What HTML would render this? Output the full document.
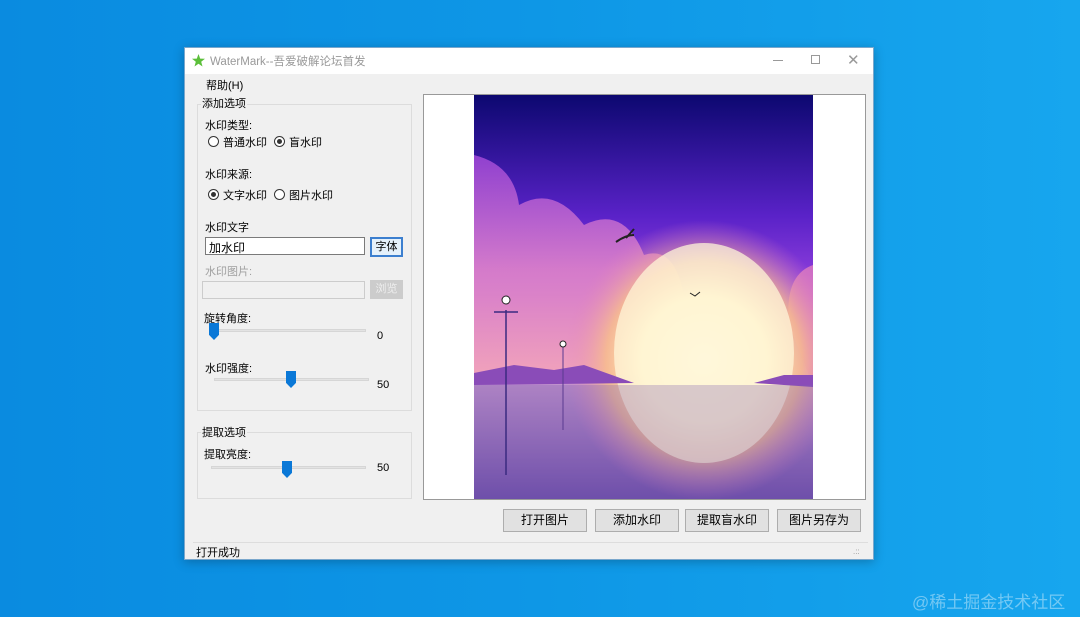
<!DOCTYPE html>
<html><head><meta charset="utf-8"><style>
*{margin:0;padding:0;box-sizing:border-box}
body{width:1080px;height:617px;overflow:hidden;position:relative;background:linear-gradient(90deg,#0a8be0 0%,#0e97e6 50%,#17a6ee 100%);font-family:"Liberation Sans","Noto Sans CJK SC",sans-serif;font-size:11px;color:#000}
.a{position:absolute}
.win{left:184px;top:47px;width:690px;height:513px;background:#f0f0f0;border:1px solid #7aa7cc;box-shadow:0 2px 10px rgba(0,0,0,.25)}
.title{left:0;top:0;width:688px;height:26px;background:#fff}
.grp{border:1px solid #dcdcdc}
.lbl{background:#f0f0f0;padding:0 1px}
.radio{width:11px;height:11px;border:1px solid #333;border-radius:50%;background:#fff}
.radio.on::after{content:"";position:absolute;left:2px;top:2px;width:5px;height:5px;border-radius:50%;background:#333}
.track{height:3px;background:#e3e3e3;border:1px solid #d6d6d6}
.thumb{width:10px;height:17px;background:#0a78d7;clip-path:polygon(0 0,100% 0,100% 70%,50% 100%,0 70%)}
.btn{height:23px;background:#e1e1e1;border:1px solid #adadad;text-align:center;line-height:21px;font-size:12px}
</style></head><body>
<div class="a win">
 <div class="a title">
  <svg class="a" style="left:7px;top:6px" width="13" height="13" viewBox="0 0 13 13"><polygon points="6.5,0 8.2,4.6 13,4.8 9.2,7.8 10.5,12.5 6.5,9.8 2.5,12.5 3.8,7.8 0,4.8 4.8,4.6" fill="#5cbf3a"/></svg>
  <div class="a" style="left:25px;top:5px;color:#999;font-size:11.5px">WaterMark--吾爱破解论坛首发</div>
  <div class="a" style="left:588px;top:12px;width:10px;height:1px;background:#999"></div>
  <div class="a" style="left:626px;top:7px;width:9px;height:9px;border:1px solid #999"></div>
  <div class="a" style="left:662px;top:3px;color:#999;font-size:15px">✕</div>
 </div>
 <div class="a" style="left:21px;top:29px;font-size:11px">帮助(H)</div>
 <div class="a grp" style="left:12px;top:56px;width:215px;height:307px"></div>
 <div class="a lbl" style="left:16px;top:47px">添加选项</div>
 <div class="a" style="left:20px;top:69px">水印类型:</div>
 <div class="a radio" style="left:23px;top:88px"></div><div class="a" style="left:38px;top:86px">普通水印</div>
 <div class="a radio on" style="left:89px;top:88px"></div><div class="a" style="left:104px;top:86px">盲水印</div>
 <div class="a" style="left:20px;top:118px">水印来源:</div>
 <div class="a radio on" style="left:23px;top:141px"></div><div class="a" style="left:38px;top:139px">文字水印</div>
 <div class="a radio" style="left:89px;top:141px"></div><div class="a" style="left:104px;top:139px">图片水印</div>
 <div class="a" style="left:20px;top:171px">水印文字</div>
 <div class="a" style="left:20px;top:189px;width:160px;height:18px;background:#fff;border:1px solid #7a7a7a;padding:1px 3px;font-size:12px">加水印</div>
 <div class="a btn" style="left:185px;top:189px;width:33px;height:20px;line-height:17px;border:2px solid #3c7fcf;background:#e5f1fb;font-size:11px">字体</div>
 <div class="a" style="left:20px;top:215px;color:#a0a0a0">水印图片:</div>
 <div class="a" style="left:17px;top:233px;width:163px;height:18px;border:1px solid #ccc;background:#f0f0f0"></div>
 <div class="a btn" style="left:185px;top:232px;width:33px;height:19px;background:#ccc;border-color:#ccc;color:#eee;line-height:17px;font-size:11px">浏览</div>
 <div class="a" style="left:19px;top:262px">旋转角度:</div>
 <div class="a track" style="left:26px;top:281px;width:155px"></div>
 <div class="a thumb" style="left:24px;top:275px"></div>
 <div class="a" style="left:192px;top:282px">0</div>
 <div class="a" style="left:20px;top:312px">水印强度:</div>
 <div class="a track" style="left:29px;top:330px;width:155px"></div>
 <div class="a thumb" style="left:101px;top:323px"></div>
 <div class="a" style="left:192px;top:331px">50</div>
 <div class="a grp" style="left:12px;top:384px;width:215px;height:67px"></div>
 <div class="a lbl" style="left:16px;top:376px">提取选项</div>
 <div class="a" style="left:19px;top:398px">提取亮度:</div>
 <div class="a track" style="left:26px;top:418px;width:155px"></div>
 <div class="a thumb" style="left:97px;top:413px"></div>
 <div class="a" style="left:192px;top:414px">50</div>
 <div class="a" style="left:238px;top:46px;width:443px;height:406px;background:#fff;border:1px solid #999"></div>
 <svg class="a" style="left:289px;top:47px" width="339" height="404" viewBox="0 0 339 404">
  <defs>
   <linearGradient id="sky" x1="0" y1="0" x2="0" y2="1"><stop offset="0" stop-color="#0c0870"/><stop offset=".3" stop-color="#5a22c8"/><stop offset=".5" stop-color="#9a44e0"/><stop offset=".68" stop-color="#e08ac8"/><stop offset="1" stop-color="#8a60b8"/></linearGradient>
   <radialGradient id="sun" cx=".5" cy=".5" r=".5"><stop offset="0" stop-color="#fffbe0"/><stop offset=".45" stop-color="#fff2c0"/><stop offset=".7" stop-color="#f8c08a" stop-opacity=".8"/><stop offset="1" stop-color="#e080c0" stop-opacity="0"/></radialGradient>
   <linearGradient id="cl" x1="0" y1="0" x2="0" y2="1"><stop offset="0" stop-color="#a048d8"/><stop offset=".5" stop-color="#e286c8"/><stop offset="1" stop-color="#f4a8b8"/></linearGradient>
   <linearGradient id="wt" x1="0" y1="0" x2="0" y2="1"><stop offset="0" stop-color="#c898d0"/><stop offset="1" stop-color="#6648a8"/></linearGradient>
  </defs>
  <rect width="339" height="404" fill="url(#sky)"/>
  <path d="M0 60 Q40 70 45 110 Q80 90 110 130 Q150 110 170 160 Q200 150 210 200 L210 290 L0 290Z" fill="url(#cl)" opacity=".85"/>
  <path d="M339 170 Q310 180 315 230 L339 290Z" fill="#e07cc0" opacity=".8"/>
  <rect y="280" width="339" height="124" fill="url(#wt)"/>
  <circle cx="230" cy="265" r="140" fill="url(#sun)"/>
  <ellipse cx="230" cy="258" rx="90" ry="110" fill="#fff6d8" opacity=".75"/>
  <path d="M0 278 L40 270 L80 275 L110 270 L160 288 L0 290Z" fill="#8a4cb8"/>
  <path d="M280 288 L310 280 L339 280 L339 292Z" fill="#8a4cb8"/>
  <rect y="290" width="339" height="114" fill="#8060b0" opacity=".3"/>
  <line x1="32" y1="215" x2="32" y2="380" stroke="#3a2a80" stroke-width="1.5"/>
  <line x1="20" y1="217" x2="44" y2="217" stroke="#3a2a80" stroke-width="1.5"/>
  <circle cx="32" cy="205" r="4" fill="#fff" stroke="#222"/>
  <line x1="89" y1="250" x2="89" y2="335" stroke="#5a3a90"/>
  <circle cx="89" cy="249" r="3" fill="#fff" stroke="#222"/>
  <path d="M142 147 Q152 140 160 140 M152 143 L160 134" stroke="#222" stroke-width="2" fill="none"/>
  <path d="M216 198 L221 201 L226 197" stroke="#222" fill="none"/>
 </svg>
 <div class="a btn" style="left:318px;top:461px;width:84px">打开图片</div>
 <div class="a btn" style="left:410px;top:461px;width:84px">添加水印</div>
 <div class="a btn" style="left:500px;top:461px;width:84px">提取盲水印</div>
 <div class="a btn" style="left:592px;top:461px;width:84px">图片另存为</div>
 <div class="a" style="left:8px;top:494px;width:675px;height:1px;background:#ddd"></div>
 <div class="a" style="left:11px;top:496px">打开成功</div>
 <div class="a" style="left:668px;top:499px;color:#999;font-size:8px">.::</div>
</div>
<div class="a" style="left:912px;top:588px;color:rgba(255,255,255,.4);font-size:17px">@稀土掘金技术社区</div>
</body></html>
